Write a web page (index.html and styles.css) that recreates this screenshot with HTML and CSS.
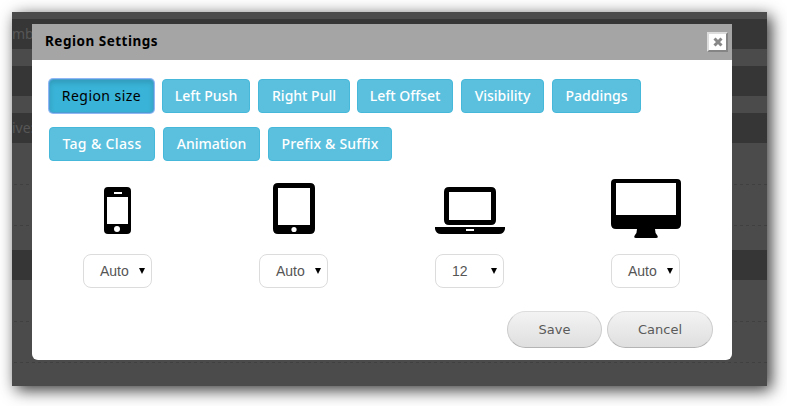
FILE: index.html
```html
<!DOCTYPE html>
<html lang="en">
<head>
<meta charset="utf-8">
<title>Region Settings</title>
<link rel="stylesheet" href="styles.css">
</head>
<body>
<main class="page">
  <div class="backdrop">
    <div class="band band-first">mb</div>
    <div class="band"></div>
    <div class="band band-live">ive:</div>
    <div class="lines lines-upper"></div>
    <div class="band band-section"></div>
    <div class="lines"></div>
  </div>
  <section class="modal">
    <header class="modal-header">
      <h1 class="modal-title">Region Settings</h1>
      <button class="close" aria-label="Close"><svg width="10" height="10" viewBox="0 0 10 10"><path d="M1.500 1.500 8.500 8.500M8.500 1.500 1.500 8.500" stroke="#888" stroke-width="3"/></svg></button>
    </header>
    <nav class="tabs">
      <div class="tab-row">
        <button class="tab tab-active">Region size</button>
        <button class="tab tab-push">Left Push</button>
        <button class="tab tab-pull">Right Pull</button>
        <button class="tab tab-offset">Left Offset</button>
        <button class="tab tab-visibility">Visibility</button>
        <button class="tab tab-paddings">Paddings</button>
      </div>
      <div class="tab-row">
        <button class="tab tab-tag">Tag &amp; Class</button>
        <button class="tab tab-animation">Animation</button>
        <button class="tab tab-prefix">Prefix &amp; Suffix</button>
      </div>
    </nav>
    <div class="devices">
      <div class="device">
        <svg class="icon" width="70" height="60" viewBox="0 0 70 60"><path fill-rule="evenodd" d="M25 8H44Q48 8 48 12V51Q48 55 44 55H25Q21 55 21 51V12Q21 8 25 8ZM24 18V45H45V18ZM31 13V15H39V13Z"/><circle cx="34" cy="50" r="3" fill="#fff"/></svg>
        <div class="select"><span>Auto</span><i class="arrow"></i></div>
      </div>
      <div class="device">
        <svg class="icon" width="70" height="60" viewBox="0 0 70 60"><path fill-rule="evenodd" d="M19 4H51Q56 4 56 9V50Q56 55 51 55H19Q14 55 14 50V9Q14 4 19 4ZM19 9V46H51V9Z"/><circle cx="35" cy="50.500" r="2.600" fill="#fff"/></svg>
        <div class="select"><span>Auto</span><i class="arrow"></i></div>
      </div>
      <div class="device">
        <svg class="icon" width="70" height="60" viewBox="0 0 70 60"><path fill-rule="evenodd" d="M14 8H56Q61 8 61 13V41Q61 46 56 46H14Q9 46 9 41V13Q9 8 14 8ZM14 13V41H56V13ZM0 48H70V50Q69 55 64 55H6Q1 55 0 50ZM31 50V52H39V50Z"/></svg>
        <div class="select"><span>12</span><i class="arrow"></i></div>
      </div>
      <div class="device">
        <svg class="icon" width="70" height="60" viewBox="0 0 70 60"><path fill-rule="evenodd" d="M4 0H66Q70 0 70 4V45Q70 50 65 50H44Q44 54 46 56Q48 59 45 59H25Q22 59 24 56Q26 54 26 50H5Q0 50 0 45V4Q0 0 4 0ZM5 4V36H65V4Z"/></svg>
        <div class="select"><span>Auto</span><i class="arrow"></i></div>
      </div>
    </div>
    <footer class="actions">
      <button class="action save">Save</button>
      <button class="action cancel">Cancel</button>
    </footer>
  </section>
</main>
</body>
</html>
```
FILE: styles.css
```css
* { box-sizing: border-box; }
html { height: 100%; background: #fff; }
body { height: 406px; margin: 0; padding: 12px; }
button { margin: 0; padding: 0; }
.page {
  position: relative;
  width: 755px;
  height: 374px;
  background: #4b4b4b;
  box-shadow: 4px 4px 15px rgba(0, 0, 0, 0.8);
}
.backdrop { display: flex; flex-direction: column; gap: 17px; height: 374px; padding-top: 7px; overflow: hidden; }
.band { height: 30px; flex: none; background: #363636; color: #565656; font: 14px/30px "Noto Sans", sans-serif; }
.lines {
  height: 90px;
  margin-left: 2px;
  flex: none;
  background:
    repeating-linear-gradient(90deg, #404040 0 3px, transparent 3px 6px) 0 24px / 100% 1px no-repeat,
    repeating-linear-gradient(90deg, #404040 0 3px, transparent 3px 6px) 0 65px / 100% 1px no-repeat;
}
.lines-upper { height: 73px; }
.modal {
  position: absolute;
  left: 20px;
  top: 12px;
  width: 700px;
  height: 336px;
  background: #fff;
  border-radius: 0 0 6px 6px;
}
.modal-header { display: flex; align-items: center; justify-content: space-between; height: 36px; padding: 0 4px 0 13px; background: #a5a5a5; }
.modal-title { margin: 0; padding-bottom: 2px; font: 700 13.5px/32px "Noto Sans", sans-serif; letter-spacing: 0.5px; color: #000; white-space: nowrap; }
.close { display: flex; align-items: center; justify-content: center; width: 21px; height: 20px; background: #fff; border: 2px solid; border-color: #ddd #858585 #858585 #ddd; }
.tabs { display: flex; flex-direction: column; gap: 14px; padding: 19px 17px 0; }
.tab-row { display: flex; }
.tab {
  height: 34px;
  margin-right: 8px;
  flex: none;
  background: #5bc0de;
  border: 1px solid #46b8da;
  border-radius: 4px;
  color: #fff;
  font: 500 14px/32px "Noto Sans", sans-serif;
  white-space: nowrap;
}
.tab-active { width: 105px; background: #39b3d7; border-color: #4a9fd0; box-shadow: inset 0 3px 5px rgba(0, 0, 0, 0.13), 0 0 0 1px #8fb7f5; color: #000; font-weight: 400; letter-spacing: 0.45px; }
.tab-push { width: 88px; }
.tab-pull { width: 92px; margin-right: 7px; }
.tab-offset { width: 96px; }
.tab-visibility { width: 83px; }
.tab-paddings { width: 89px; }
.tab-tag { width: 106px; letter-spacing: 0.35px; }
.tab-animation { width: 97px; }
.tab-prefix { width: 124px; letter-spacing: 0.2px; }
.devices { display: flex; gap: 106px; padding: 18px 0 0 51px; }
.device { width: 70px; }
.icon { display: block; }
.select {
  display: flex;
  align-items: center;
  justify-content: space-between;
  width: 69px;
  height: 34px;
  margin-top: 15px;
  padding: 0 6px 0 16px;
  border: 1px solid #dcdcdc;
  border-radius: 8px;
  color: #555;
  font: 14px/32px "Liberation Sans", sans-serif;
}
.arrow { width: 6px; height: 6px; background: #000; clip-path: polygon(0 0, 100% 0, 50% 100%); }
.actions { display: flex; justify-content: flex-end; gap: 5px; padding: 23px 19px 0 0; }
.action {
  height: 37px;
  padding-top: 1px;
  border: 1px solid #ccc;
  border-top-color: #ddd;
  border-bottom-color: #b4b4b4;
  border-radius: 19px;
  background: linear-gradient(#f3f3f3, #dfdfdf);
  color: #5a5a5a;
  font: 13px/34px "DejaVu Sans", sans-serif;
}
.save { width: 95px; }
.cancel { width: 106px; }
```
